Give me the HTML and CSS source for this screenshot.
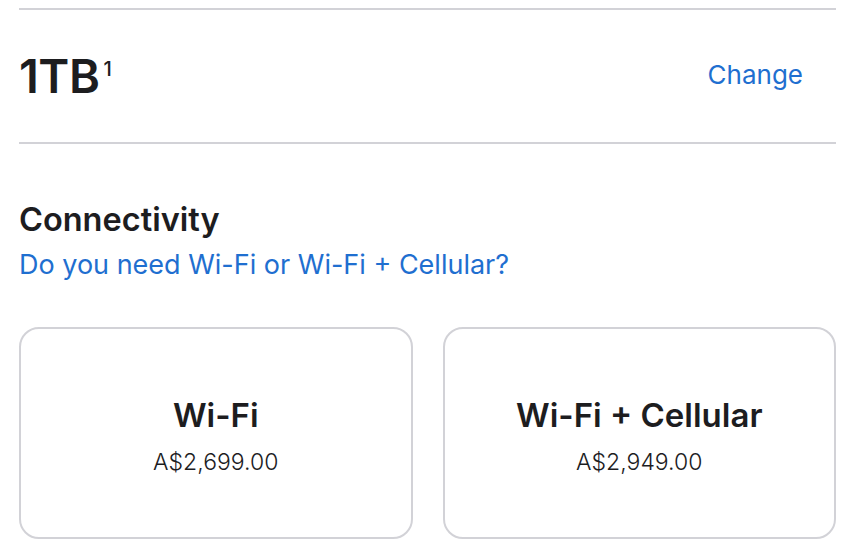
FILE: index.html
```html
<!DOCTYPE html>
<html lang="en">

<head>
    <meta charset="UTF-8">
    <meta name="viewport" content="width=device-width, initial-scale=1.0">
    <title>Configure</title>
    <link rel="stylesheet" href="styles.css">
</head>

<body>
    <div class="page">
        <div class="summary">
            <div class="capacity">1TB<sup>1</sup></div>
            <a class="change" href="#">Change</a>
        </div>

        <div class="section">
            <h2 class="sectionTitle">Connectivity</h2>
            <a class="helpLink" href="#">Do you need Wi-Fi or Wi-Fi + Cellular?</a>
        </div>

        <div class="options">
            <div class="option">
                <div class="optionName">Wi-Fi</div>
                <div class="optionPrice">A$2,699.00</div>
            </div>
            <div class="option">
                <div class="optionName">Wi-Fi + Cellular</div>
                <div class="optionPrice">A$2,949.00</div>
            </div>
        </div>
    </div>
</body>

</html>
```

FILE: styles.css
```css
body {
    font-family: 'Inter', 'Liberation Sans', sans-serif;
    background-color: #fff;
    color: #1d1d1f;
    margin: 0;
    padding: 0;
}

.page {
    width: 817px;
    margin-left: 19px;
    padding-top: 8px;
}

.summary {
    display: flex;
    justify-content: space-between;
    align-items: center;
    height: 132px;
    border-top: 2px solid #d2d2d7;
    border-bottom: 2px solid #d2d2d7;
    padding-right: 33px;
}

.capacity {
    font-size: 47px;
    font-weight: 600;
    letter-spacing: -0.5px;
    line-height: 56px;
}

.capacity sup {
    font-size: 20px;
    font-weight: 500;
    vertical-align: top;
    line-height: 20px;
    position: relative;
    top: 11px;
    margin-left: 4px;
}

.change {
    color: #1f6fd0;
    font-size: 26px;
    text-decoration: none;
    position: relative;
    top: -2px;
}

.section {
    padding-top: 56px;
}

.sectionTitle {
    font-size: 32.5px;
    font-weight: 600;
    margin: 0;
    line-height: 40px;
}

.helpLink {
    display: block;
    color: #1f6fd0;
    font-size: 27px;
    text-decoration: none;
    margin-top: 8px;
}

.options {
    display: grid;
    grid-template-columns: 1fr 1fr;
    gap: 30px;
    margin-top: 46px;
}

.option {
    border: 2px solid #d2d2d7;
    border-radius: 20px;
    height: 212px;
    padding-top: 4px;
    display: flex;
    flex-direction: column;
    justify-content: center;
    align-items: center;
    box-sizing: border-box;
}

.optionName {
    font-size: 33px;
    font-weight: 600;
}

.optionPrice {
    font-size: 23px;
    font-weight: 300;
    margin-top: 13px;
}
```
